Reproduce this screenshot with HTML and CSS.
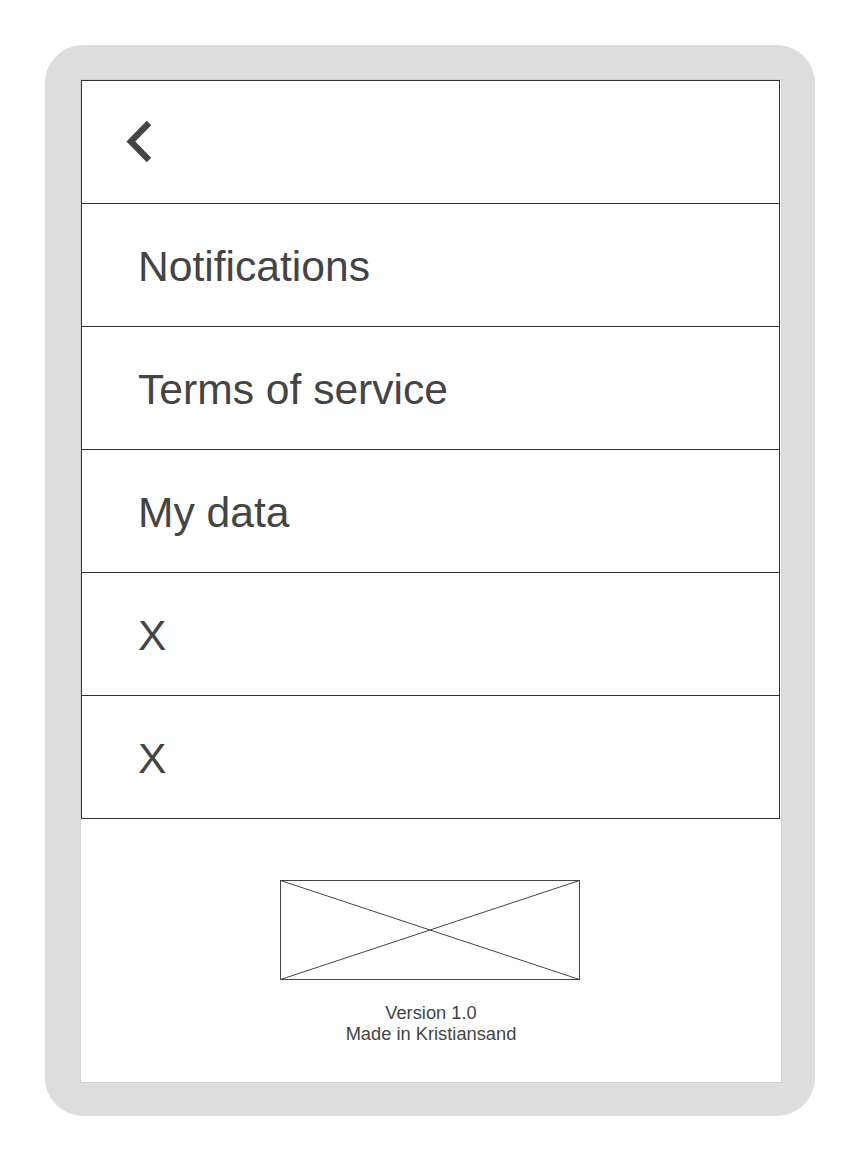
FILE: index.html
```html
<!DOCTYPE html>
<html>
<head>
<meta charset="utf-8">
<link rel="stylesheet" href="styles.css">
</head>
<body>
<div class="device">
  <div class="screen">
    <div class="menu">
      <div class="row back">
        <svg class="chevron" width="30" height="44" viewBox="0 0 30 44">
          <polyline points="27,3 8.8,21.5 27,40" fill="none" stroke="#444" stroke-width="6.2" stroke-linejoin="miter"/>
        </svg>
      </div>
      <div class="row">Notifications</div>
      <div class="row">Terms of service</div>
      <div class="row">My data</div>
      <div class="row">X</div>
      <div class="row">X</div>
    </div>
    <div class="footer">
      <svg class="placeholder" width="300" height="100" viewBox="0 0 300 100">
        <rect x="0.5" y="0.5" width="299" height="99" fill="#fff" stroke="#444" stroke-width="1"/>
        <line x1="0.5" y1="0.5" x2="299.5" y2="99.5" stroke="#444" stroke-width="1"/>
        <line x1="299.5" y1="0.5" x2="0.5" y2="99.5" stroke="#444" stroke-width="1"/>
      </svg>
      <div class="info">
        <div>Version 1.0</div>
        <div>Made in Kristiansand</div>
      </div>
    </div>
  </div>
</div>
</body>
</html>
```

FILE: styles.css
```css
html, body {
  margin: 0;
  padding: 0;
  background: #fff;
}

body {
  font-family: "Liberation Sans", Arial, sans-serif;
  color: #444;
}

.device {
  margin: 45px 0 0 45px;
  width: 770px;
  height: 1071px;
  box-sizing: border-box;
  background: #dddddd;
  border-radius: 38px;
  padding: 34px 33px 33px 35px;
}

.screen {
  width: 702px;
  height: 1004px;
  box-sizing: border-box;
  background: #fff;
  border: 1px solid #d2d2d2;
  display: flex;
  flex-direction: column;
}

.menu {
  width: 699px;
  box-sizing: border-box;
  border: 1px solid #333;
}

.row {
  height: 122px;
  box-sizing: border-box;
  display: flex;
  align-items: center;
  padding-left: 56px;
  padding-top: 2px;
  font-size: 42.6px;
  border-top: 1px solid #333;
}

.row:first-child {
  border-top: none;
  height: 122px;
}

.row + .row {
  height: 123px;
}

.row.back {
  padding-left: 40px;
  padding-top: 0;
}

.chevron {
  display: block;
}

.footer {
  display: flex;
  flex-direction: column;
  align-items: center;
  padding-top: 61px;
  width: 700px;
}

.placeholder {
  display: block;
  margin-right: 2px;
}

.info {
  margin-top: 22px;
  font-size: 18.3px;
  line-height: 21px;
  text-align: center;
  color: #444;
}
```
